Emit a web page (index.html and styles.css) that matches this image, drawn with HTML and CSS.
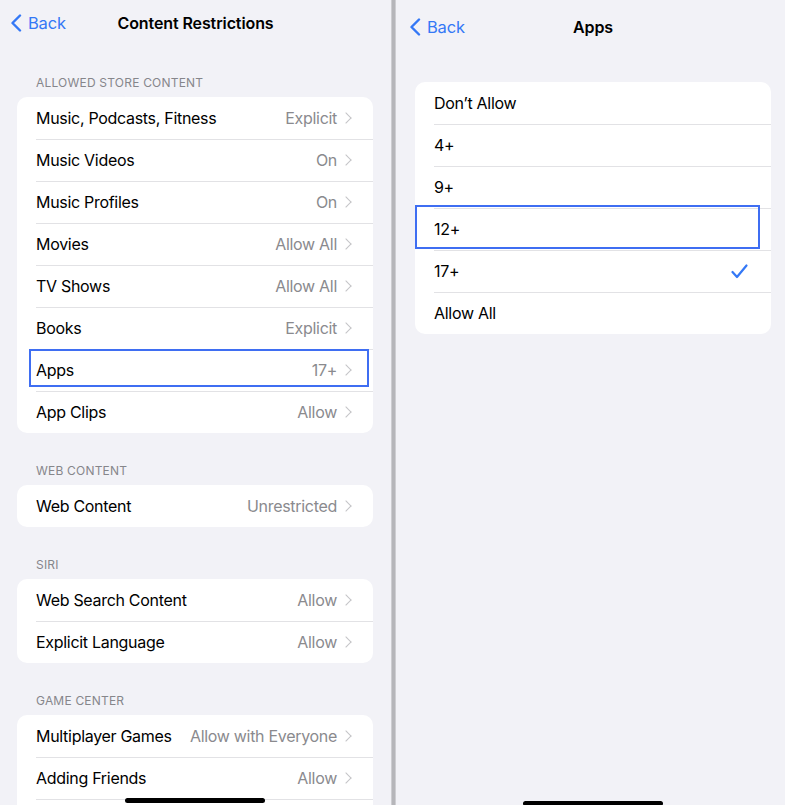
FILE: index.html
```html
<!DOCTYPE html>
<html lang="en">
<head>
    <meta charset="UTF-8">
    <title>Content Restrictions</title>
    <link rel="stylesheet" href="styles.css">
</head>
<body>
    <div class="screen left">
        <div class="navbar">
            <span class="back">
                <svg width="12" height="18" viewBox="0 0 12 18"><polyline points="10,1.5 2.5,9 10,16.5" fill="none" stroke="#3478f6" stroke-width="2.4" stroke-linecap="round" stroke-linejoin="round"/></svg>
                Back
            </span>
            <span class="title">Content Restrictions</span>
        </div>

        <div class="section-header first">ALLOWED STORE CONTENT</div>
        <div class="card">
            <div class="row"><span class="label">Music, Podcasts, Fitness</span><span class="value">Explicit</span><span class="chev"></span></div>
            <div class="row"><span class="label">Music Videos</span><span class="value">On</span><span class="chev"></span></div>
            <div class="row"><span class="label">Music Profiles</span><span class="value">On</span><span class="chev"></span></div>
            <div class="row"><span class="label">Movies</span><span class="value">Allow All</span><span class="chev"></span></div>
            <div class="row"><span class="label">TV Shows</span><span class="value">Allow All</span><span class="chev"></span></div>
            <div class="row"><span class="label">Books</span><span class="value">Explicit</span><span class="chev"></span></div>
            <div class="row marked-left"><span class="label">Apps</span><span class="value">17+</span><span class="chev"></span></div>
            <div class="row"><span class="label">App Clips</span><span class="value">Allow</span><span class="chev"></span></div>
        </div>

        <div class="section-header">WEB CONTENT</div>
        <div class="card">
            <div class="row"><span class="label">Web Content</span><span class="value">Unrestricted</span><span class="chev"></span></div>
        </div>

        <div class="section-header">SIRI</div>
        <div class="card">
            <div class="row"><span class="label">Web Search Content</span><span class="value">Allow</span><span class="chev"></span></div>
            <div class="row"><span class="label">Explicit Language</span><span class="value">Allow</span><span class="chev"></span></div>
        </div>

        <div class="section-header">GAME CENTER</div>
        <div class="card">
            <div class="row"><span class="label">Multiplayer Games</span><span class="value">Allow with Everyone</span><span class="chev"></span></div>
            <div class="row"><span class="label">Adding Friends</span><span class="value">Allow</span><span class="chev"></span></div>
            <div class="row"></div>
        </div>

        <div class="home-bar"></div>
    </div>

    <div class="divider"></div>

    <div class="screen right">
        <div class="navbar tall">
            <span class="back">
                <svg width="12" height="18" viewBox="0 0 12 18"><polyline points="10,1.5 2.5,9 10,16.5" fill="none" stroke="#3478f6" stroke-width="2.4" stroke-linecap="round" stroke-linejoin="round"/></svg>
                Back
            </span>
            <span class="title">Apps</span>
        </div>

        <div class="card options">
            <div class="row"><span class="label">Don’t Allow</span></div>
            <div class="row"><span class="label">4+</span></div>
            <div class="row"><span class="label">9+</span></div>
            <div class="row marked-right"><span class="label">12+</span></div>
            <div class="row"><span class="label">17+</span>
                <svg class="check" width="17" height="15" viewBox="0 0 17 15"><polyline points="1.5,8 6,13 15.5,1.5" fill="none" stroke="#3478f6" stroke-width="2.2" stroke-linecap="round" stroke-linejoin="round"/></svg>
            </div>
            <div class="row"><span class="label">Allow All</span></div>
        </div>

        <div class="home-bar"></div>
    </div>
</body>
</html>
```

FILE: styles.css
```css
body {
    margin: 0;
    display: flex;
    width: 785px;
    height: 805px;
    overflow: hidden;
    background-color: #f2f2f7;
    font-family: Inter, "Liberation Sans", sans-serif;
    color: #000;
}
.screen {
    position: relative;
    height: 805px;
    overflow: hidden;
    background-color: #f2f2f7;
}
.screen.left {
    width: 391px;
}
.screen.right {
    width: 389px;
}
.divider {
    width: 5px;
    height: 805px;
    background: linear-gradient(to right, #e4e4e8 0, #b6b6ba 1px, #b6b6ba 4px, #e6e6ea 5px);
}
.navbar {
    position: relative;
    height: 46px;
    display: flex;
    align-items: center;
    justify-content: center;
}
.navbar.tall {
    height: 54px;
    padding-left: 5px;
}
.back {
    position: absolute;
    left: 10px;
    top: 0;
    bottom: 0;
    display: flex;
    align-items: center;
    gap: 6px;
    color: #3478f6;
    font-size: 16.5px;
    letter-spacing: -0.2px;
}
.right .back {
    left: 13px;
}
.title {
    font-size: 16px;
    font-weight: 600;
    letter-spacing: -0.1px;
}
.section-header {
    margin: 30px 0 6px 36px;
    font-size: 12px;
    line-height: 16px;
    color: #86868b;
    letter-spacing: 0.2px;
}
.section-header.first {
    margin-top: 29px;
}
.card {
    margin: 0 18px 0 17px;
    background: #fff;
    border-radius: 10px;
}
.card.options {
    margin: 28px 14px 0 19px;
}
.row {
    position: relative;
    height: 42px;
    display: flex;
    align-items: center;
    padding: 0 21px 0 19px;
    font-size: 16px;
    letter-spacing: -0.3px;
}
.row + .row::before {
    content: "";
    position: absolute;
    top: 0;
    left: 19px;
    right: 0;
    border-top: 1px solid #e2e2e5;
}
.label {
    flex: 1;
    white-space: nowrap;
}
.value {
    color: #8a8a8e;
    white-space: nowrap;
}
.chev {
    width: 7px;
    height: 7px;
    margin-left: 5px;
    margin-right: 2px;
    border-top: 1.6px solid #c4c4c7;
    border-right: 1.6px solid #c4c4c7;
    transform: rotate(45deg);
}
.check {
    margin-right: 2px;
}
.marked-left::after {
    content: "";
    position: absolute;
    left: 12px;
    right: 4px;
    top: 0;
    bottom: 4px;
    border: 2px solid #3f6ef2;
}
.marked-right::after {
    content: "";
    position: absolute;
    left: 0;
    right: 11px;
    top: -3px;
    bottom: 1px;
    border: 2px solid #3f6ef2;
}
.home-bar {
    position: absolute;
    left: 125px;
    bottom: 2px;
    width: 140px;
    height: 5px;
    border-radius: 3px;
    background: #000;
}
.right .home-bar {
    left: 127px;
    bottom: -1px;
}
```
